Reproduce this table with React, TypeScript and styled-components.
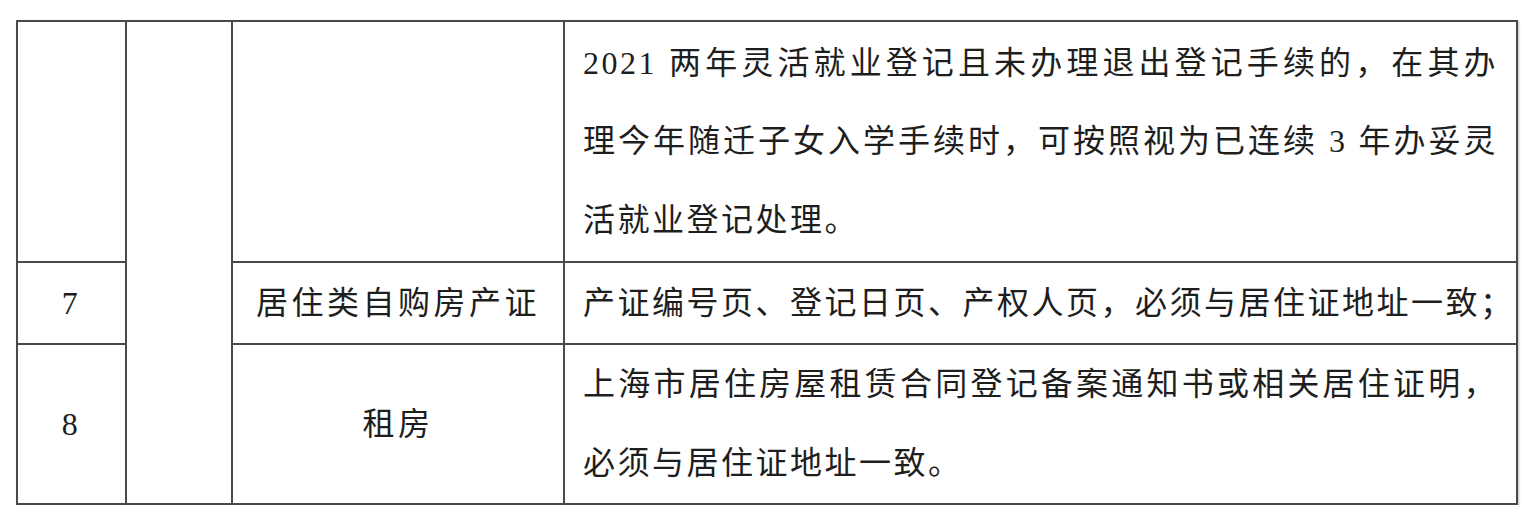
import React from 'react';
import styled, { createGlobalStyle } from 'styled-components';

const GlobalStyle = createGlobalStyle`
    html, body {
        margin: 0;
        padding: 0;
        background: #ffffff;
    }
    body {
        font-family: "Liberation Serif", "Noto Sans CJK SC", serif;
        color: #1e1e1e;
    }
`;

const Page = styled.div`
    padding: 20px 0 0 16px;
`;

const Table = styled.table`
    border-collapse: collapse;
    table-layout: fixed;
    width: 1502px;
    border: 2px solid #4a4a4a;
    box-shadow: 1px 1px 2px rgba(0, 0, 0, 0.25);
`;

const Row = styled.tr<{ $height: number }>`
    height: ${p => p.$height}px;
`;

const Cell = styled.td<{ $align?: 'left' | 'center' }>`
    border: 2px solid #4a4a4a;
    padding: 0 18px 0 18px;
    vertical-align: middle;
    text-align: ${p => p.$align || 'center'};
    font-size: 32px;
    line-height: 80px;
    letter-spacing: ${p => (p.$align === 'left' ? 2.5 : 3.5)}px;
    color: #1e1e1e;
`;

const Line = styled.span<{ $fill?: boolean }>`
    display: block;
    white-space: nowrap;
    text-align: justify;
    text-align-last: ${p => (p.$fill ? 'justify' : 'left')};
    line-height: ${p => (p.$fill ? 78 : 80)}px;
`;

interface Item {
    no?: string;
    name?: string;
    lines: string[];
    height: number;
}

const items: Item[] = [
    {
        lines: [
            '2021 两年灵活就业登记且未办理退出登记手续的，在其办',
            '理今年随迁子女入学手续时，可按照视为已连续 3 年办妥灵',
            '活就业登记处理。',
        ],
        height: 241,
    },
    {
        no: '7',
        name: '居住类自购房产证',
        lines: ['产证编号页、登记日页、产权人页，必须与居住证地址一致；'],
        height: 79,
    },
    {
        no: '8',
        name: '租房',
        lines: ['上海市居住房屋租赁合同登记备案通知书或相关居住证明，', '必须与居住证地址一致。'],
        height: 160,
    },
];

const App = () => (
    <Page>
        <GlobalStyle />
        <Table>
            <colgroup>
                <col style={{ width: 109 }} />
                <col style={{ width: 106 }} />
                <col style={{ width: 332 }} />
                <col />
            </colgroup>
            <tbody>
                {items.map((item, i) => (
                    <Row key={i} $height={item.height}>
                        <Cell>{item.no}</Cell>
                        {i === 0 && <Cell rowSpan={items.length} />}
                        <Cell>{item.name}</Cell>
                        <Cell $align="left">
                            {item.lines.map((line, j) => (
                                <Line
                                    key={j}
                                    $fill={item.lines.length > 1 && j < item.lines.length - 1}
                                >
                                    {line}
                                </Line>
                            ))}
                        </Cell>
                    </Row>
                ))}
            </tbody>
        </Table>
    </Page>
);

export default App;
